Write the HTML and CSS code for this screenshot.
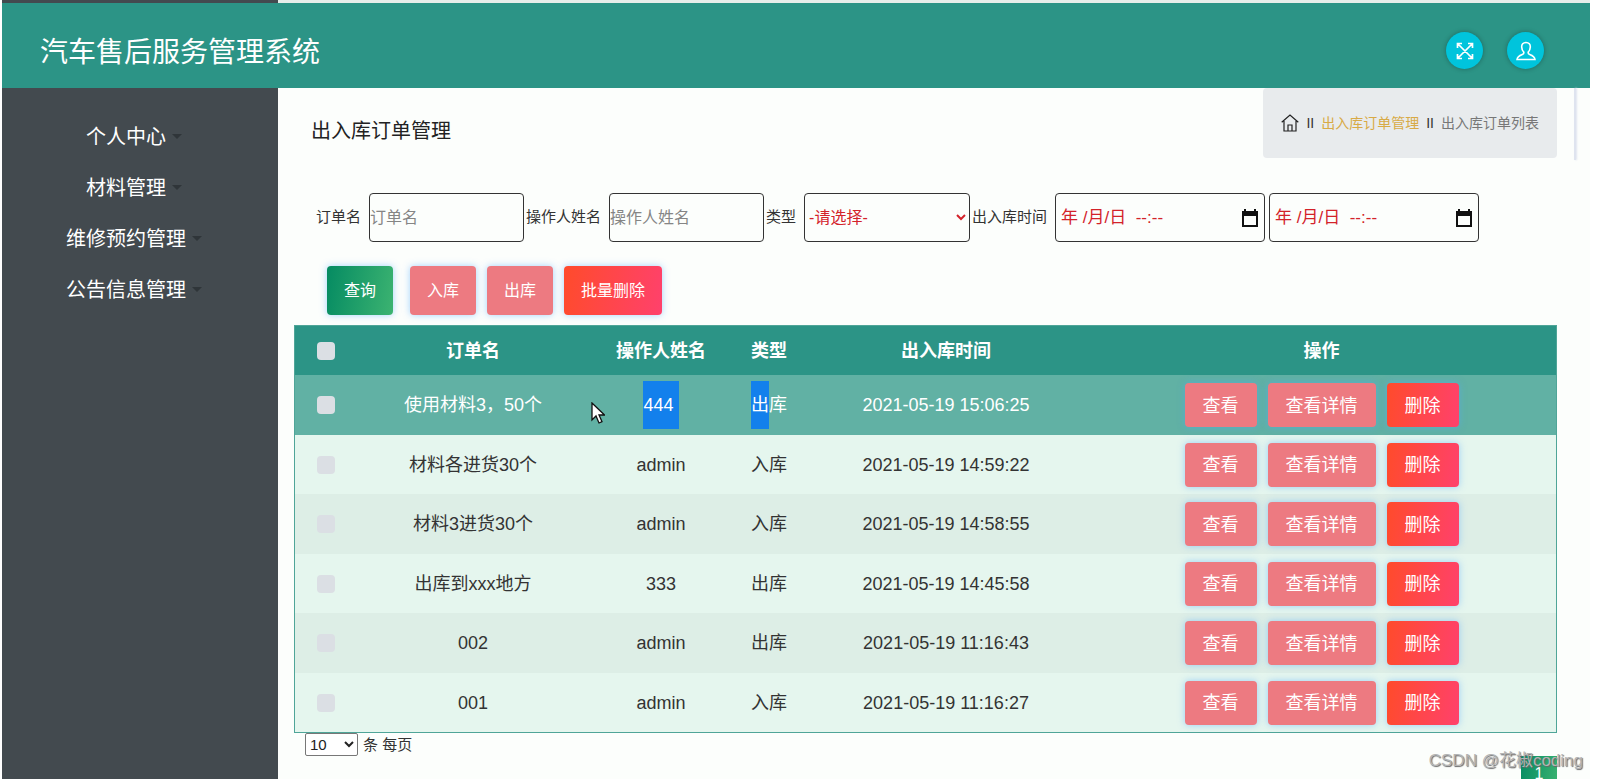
FILE: index.html
```html
<!DOCTYPE html>
<html lang="zh-CN">
<head>
<meta charset="utf-8">
<title>汽车售后服务管理系统</title>
<link rel="stylesheet" href="styles.css">
</head>
<body>
<div class="app">
  <div class="topline"></div>
  <header class="header">
    <h1 class="brand">汽车售后服务管理系统</h1>
    <div class="header-actions">
      <button class="round-btn" type="button" aria-label="全屏">
        <svg viewBox="0 0 18 18" width="18" height="18" fill="none" stroke="#fff" stroke-width="1.700"><path d="M2 2l14 14M16 2L2 16M1.500 6v-4.500h4.500M12 1.500h4.500v4.500M16.500 12v4.500h-4.500M6 16.500h-4.500v-4.500"/></svg>
      </button>
      <button class="round-btn" type="button" aria-label="个人">
        <svg viewBox="0 0 20 20" width="20" height="20" fill="none" stroke="#fff" stroke-width="1.600"><path d="M10 1.500c-2.900 0-4.500 2-4.300 4.600.1 2.100.8 3.800 2.100 5 .3 1.400-.2 2-1.500 2.500-3 1.100-5 1.900-5.300 4.900h18c-.3-3-2.300-3.800-5.300-4.900-1.300-.5-1.800-1.100-1.500-2.500 1.300-1.200 2-2.900 2.100-5C14.500 3.500 12.900 1.500 10 1.500z"/></svg>
      </button>
    </div>
  </header>
  <div class="body">
    <nav class="sidebar">
      <a class="menu-item" href="#">个人中心<span class="caret"></span></a>
      <a class="menu-item" href="#">材料管理<span class="caret"></span></a>
      <a class="menu-item" href="#">维修预约管理<span class="caret"></span></a>
      <a class="menu-item" href="#">公告信息管理<span class="caret"></span></a>
    </nav>
    <main class="main">
      <div class="page-head">
        <h2 class="page-title">出入库订单管理</h2>
        <div class="crumbs">
          <a class="home" href="#" aria-label="首页"><svg viewBox="0 0 18 18" width="18" height="18" fill="none" stroke="#222" stroke-width="1.200"><path d="M.7 8.200L9 1l8.300 7.200M3 7v10h12V7M7 17v-6h4v6"/></svg></a>
          <span>II</span>
          <a class="crumb-link" href="#">出入库订单管理</a>
          <span>II</span>
          <span class="crumb-here">出入库订单列表</span>
        </div>
        <div class="edge"></div>
      </div>

      <form class="filters">
        <label for="order">订单名</label>
        <input class="field" id="order" type="text" placeholder="订单名">
        <label for="person">操作人姓名</label>
        <input class="field" id="person" type="text" placeholder="操作人姓名">
        <label for="kind">类型</label>
        <select class="field kind" id="kind"><option>-请选择-</option><option>入库</option><option>出库</option></select>
        <label for="from">出入库时间</label>
        <span class="date">
          <input id="from" type="text" value="年 /月/日  --:--">
          <svg viewBox="0 0 16 18" width="16" height="18"><path fill="#111" d="M2 0h2v2h8V0h2v2h2v16H0V2h2zM2 7v9h12V7z" fill-rule="evenodd"/></svg>
        </span>
        <span class="date">
          <input type="text" aria-label="结束时间" value="年 /月/日  --:--">
          <svg viewBox="0 0 16 18" width="16" height="18"><path fill="#111" d="M2 0h2v2h8V0h2v2h2v16H0V2h2zM2 7v9h12V7z" fill-rule="evenodd"/></svg>
        </span>
      </form>

      <div class="toolbar">
        <button class="btn green" type="button">查询</button>
        <button class="btn pink" type="button">入库</button>
        <button class="btn pink" type="button">出库</button>
        <button class="btn red" type="button">批量删除</button>
      </div>

      <div class="table-wrap">
        <table class="orders">
          <colgroup><col class="c-check"><col class="c-name"><col class="c-person"><col class="c-kind"><col class="c-time"><col></colgroup>
          <thead>
            <tr><th><input type="checkbox" aria-label="全选"></th><th>订单名</th><th>操作人姓名</th><th>类型</th><th>出入库时间</th><th>操作</th></tr>
          </thead>
          <tbody>
            <tr class="active"><td><input type="checkbox" aria-label="选择"></td><td>使用材料3，50个</td><td><span class="sel">444&nbsp;</span></td><td><span class="sel">出</span>库</td><td>2021-05-19 15:06:25</td><td><div class="ops"><button class="btn pink" type="button">查看</button><button class="btn pink" type="button">查看详情</button><button class="btn red" type="button">删除</button></div></td></tr>
            <tr><td><input type="checkbox" aria-label="选择"></td><td>材料各进货30个</td><td>admin</td><td>入库</td><td>2021-05-19 14:59:22</td><td><div class="ops"><button class="btn pink" type="button">查看</button><button class="btn pink" type="button">查看详情</button><button class="btn red" type="button">删除</button></div></td></tr>
            <tr><td><input type="checkbox" aria-label="选择"></td><td>材料3进货30个</td><td>admin</td><td>入库</td><td>2021-05-19 14:58:55</td><td><div class="ops"><button class="btn pink" type="button">查看</button><button class="btn pink" type="button">查看详情</button><button class="btn red" type="button">删除</button></div></td></tr>
            <tr><td><input type="checkbox" aria-label="选择"></td><td>出库到xxx地方</td><td>333</td><td>出库</td><td>2021-05-19 14:45:58</td><td><div class="ops"><button class="btn pink" type="button">查看</button><button class="btn pink" type="button">查看详情</button><button class="btn red" type="button">删除</button></div></td></tr>
            <tr><td><input type="checkbox" aria-label="选择"></td><td>002</td><td>admin</td><td>出库</td><td>2021-05-19 11:16:43</td><td><div class="ops"><button class="btn pink" type="button">查看</button><button class="btn pink" type="button">查看详情</button><button class="btn red" type="button">删除</button></div></td></tr>
            <tr><td><input type="checkbox" aria-label="选择"></td><td>001</td><td>admin</td><td>入库</td><td>2021-05-19 11:16:27</td><td><div class="ops"><button class="btn pink" type="button">查看</button><button class="btn pink" type="button">查看详情</button><button class="btn red" type="button">删除</button></div></td></tr>
          </tbody>
        </table>
        <svg class="cursor" viewBox="0 0 14 22" width="14" height="22"><path d="M1 1v17l4-4 3 7 3-1.300-3-6.700h5.500z" fill="#fff" stroke="#111" stroke-width="1.300"/></svg>
      </div>

      <div class="pager">
        <select id="size"><option>10</option><option>20</option></select>
        <label for="size">条 每页</label>
        <button class="page-no green" type="button">1</button>
      </div>
    </main>
  </div>
  <div class="watermark">CSDN @花椒coding</div>
</div>
</body>
</html>
```

FILE: styles.css
```css
* { box-sizing: border-box; }

body {
  margin: 0;
  height: 100vh;
  overflow: hidden;
  background: #fff;
  color: #333;
  font: 15px/24px "Liberation Sans", "Noto Sans CJK SC", sans-serif;
}

input, select, button { font-family: inherit; }
a { text-decoration: none; }

.app {
  position: relative;
  display: flex;
  flex-direction: column;
  height: 100vh;
  margin: 0 7px 0 2px;
  overflow: hidden;
}

.topline {
  flex: none;
  height: 3px;
  background: linear-gradient(90deg, #434a4f 276px, #e7eeea 276px);
}

.header {
  flex: none;
  display: flex;
  justify-content: space-between;
  align-items: center;
  height: 85px;
  padding: 10px 46px 0 38px;
  background: #2c9486;
}

.brand {
  margin: 0;
  padding-top: 5px;
  color: #fff;
  font-size: 28px;
  font-weight: 400;
  line-height: 40px;
}

.header-actions { display: flex; gap: 24px; }

.round-btn {
  display: grid;
  place-items: center;
  width: 37px;
  height: 37px;
  padding: 0;
  border: 0;
  border-radius: 50%;
  background: #00c4dc;
  box-shadow: 0 0 5px rgba(0, 0, 0, .3);
}

.body { flex: 1; display: flex; min-height: 0; }

.sidebar {
  flex: none;
  width: 276px;
  padding: 23px 12px 0 0;
  background: #434a4f;
}

.menu-item {
  display: flex;
  justify-content: center;
  align-items: center;
  gap: 6px;
  height: 51px;
  color: #fff;
  font-size: 20px;
}

.caret {
  border: 5px solid transparent;
  border-top-color: #2f3539;
  border-bottom: 0;
}

.main { flex: 1; min-width: 0; background: #fcfefc; }

.page-head {
  display: flex;
  height: 72px;
  padding-right: 14px;
}

.page-title {
  flex: 1;
  margin: 0;
  padding: 28px 0 0 33px;
  color: #222;
  font-size: 20px;
  font-weight: 400;
  line-height: 30px;
}

.crumbs {
  display: flex;
  align-items: center;
  gap: 7px;
  height: 70px;
  padding: 0 18px;
  border-radius: 4px;
  background: #e8ebed;
  font-size: 14px;
}

.home { display: flex; }
.crumb-link { color: #d8aa45; }
.crumb-here { color: #777; }

.edge {
  width: 2px;
  margin-left: 17px;
  background: #dfe4ef;
  box-shadow: 1px 0 2px #dfe4ef;
}

.filters {
  display: flex;
  align-items: center;
  padding: 33px 0 0 38px;
}

.filters label {
  margin-right: 8px;
  padding-bottom: 2px;
  white-space: nowrap;
}

.field, .date {
  width: 155px;
  height: 49px;
  margin-right: 2px;
  padding: 0;
  border: 1px solid #333;
  border-radius: 4px;
  background: transparent;
  font-size: 16px;
}

.field::placeholder { color: #858585; }
.field.kind { width: 166px; color: #d3222a; }

.date {
  display: flex;
  align-items: center;
  width: 210px;
  margin-right: 4px;
  padding: 0 6px 0 5px;
}

.date input {
  flex: 1;
  min-width: 0;
  padding: 0 0 4px;
  border: 0;
  background: none;
  color: #d3222a;
  font-size: 17px;
}

.btn {
  height: 49px;
  padding: 0 17px 3px;
  border: 0;
  border-radius: 4px;
  box-shadow: 0 0 7px rgba(80, 170, 255, .5);
  color: #fff;
  font-size: 16px;
}

.green { background: linear-gradient(100deg, #058b62, #3cb371); }
.pink { background: #ed7a81; }
.red { background: linear-gradient(100deg, #ff4b2b, #ff416c); }

.toolbar {
  display: flex;
  gap: 11px;
  padding: 24px 0 10px 49px;
}

.toolbar .green { margin-right: 6px; }

.table-wrap { position: relative; margin: 0 33px 0 16px; }

.orders {
  width: 100%;
  table-layout: fixed;
  border-spacing: 0;
  border: 1px solid #4fa598;
  color: #333;
  font-size: 18px;
  text-align: center;
}

.c-check { width: 62px; }
.c-name { width: 232px; }
.c-person { width: 144px; }
.c-kind { width: 72px; }
.c-time { width: 282px; }

.orders th, .orders td { padding: 0; }
.orders th { height: 49px; background: #2c9486; color: #fff; }
.orders td { height: 60px; background: #e5f6ee; }
.orders tbody tr:nth-child(even) td { height: 59px; }
.orders tbody tr:nth-child(odd) td { background: #ddeee6; }
.orders tbody tr.active td { background: #61b1a4; color: #fff; }

.orders input {
  display: block;
  appearance: none;
  width: 18px;
  height: 18px;
  margin: 0 auto;
  border-radius: 4px;
  background: #dbdfe4;
}

.sel { padding: 14px 0; background: #1380ec; }

.ops { display: flex; justify-content: center; gap: 11px; }
.ops .btn { height: 44px; padding: 0 18px 3px; font-size: 18px; }

.cursor { position: absolute; left: 297px; top: 77px; }

.pager {
  display: flex;
  align-items: flex-start;
  gap: 5px;
  margin: 0 33px 0 27px;
}

.pager select {
  width: 53px;
  height: 23px;
  padding: 0;
  border: 1px solid #777;
  border-radius: 2px;
  background: #fff;
  color: #222;
  font-size: 15px;
}

.page-no {
  width: 36px;
  height: 36px;
  margin: 23px 0 0 auto;
  padding: 0;
  border: 0;
  color: #fff;
  font-size: 16px;
}

.watermark {
  position: absolute;
  right: 7px;
  bottom: 6px;
  color: #b4b4b4;
  font-size: 17px;
  text-shadow: 1px 1px 1px #666;
}
```
